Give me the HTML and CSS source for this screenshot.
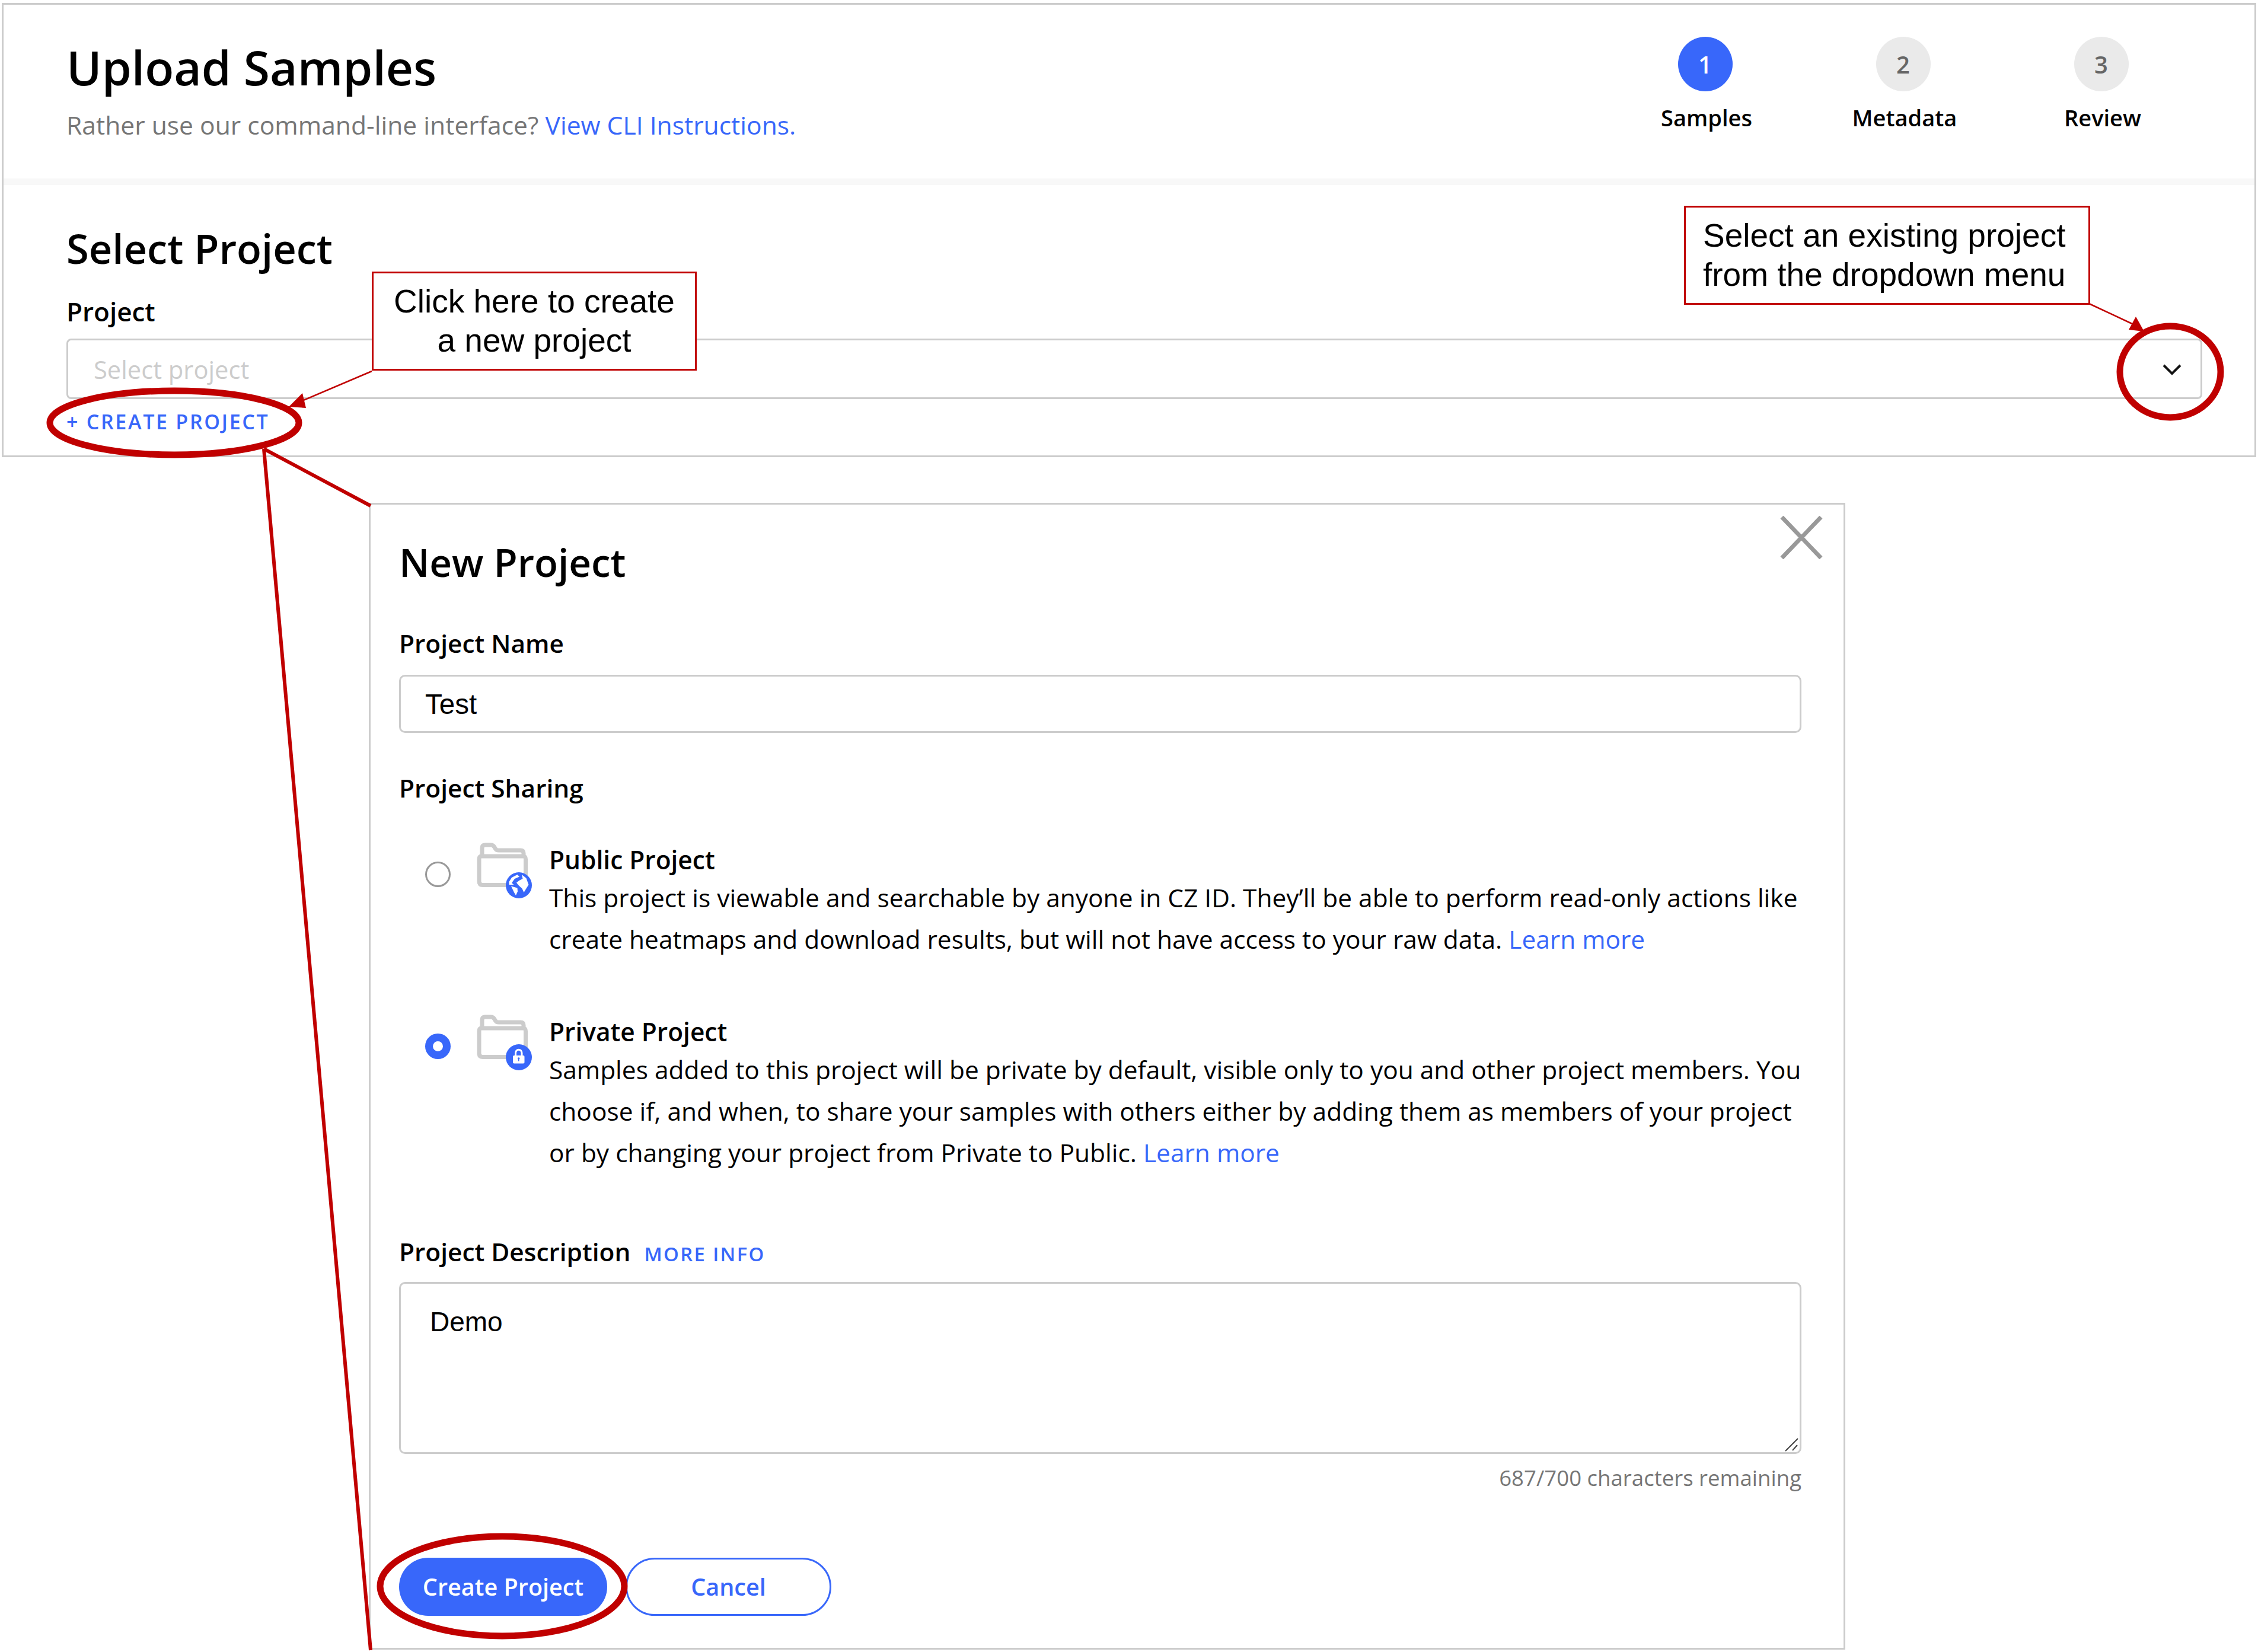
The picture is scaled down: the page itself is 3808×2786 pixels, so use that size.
FILE: index.html
```html
<!DOCTYPE html>
<html lang="en">
<head>
<meta charset="utf-8">
<title>Upload Samples</title>
<link rel="stylesheet" href="styles.css">
</head>
<body>
<div class="page">
  <section class="top-card">
    <header class="head">
      <div class="head-text">
        <h1 class="title">Upload Samples</h1>
        <p class="subtitle">Rather use our command-line interface? <a class="link">View CLI Instructions.</a></p>
      </div>
      <ol class="steps">
        <li class="step"><span class="dot dot-on">1</span><span class="step-label">Samples</span></li>
        <li class="step"><span class="dot">2</span><span class="step-label">Metadata</span></li>
        <li class="step"><span class="dot">3</span><span class="step-label">Review</span></li>
      </ol>
    </header>
    <div class="select-area">
      <h2 class="section-title">Select Project</h2>
      <div class="label project-label">Project</div>
      <div class="select">
        <span class="placeholder">Select project</span>
        <svg class="chevron" width="34" height="20" viewBox="0 0 34 20"><path d="M3 3 L17 17 L31 3" fill="none" stroke="#111" stroke-width="4"/></svg>
      </div>
      <a class="create-link">+ CREATE PROJECT</a>
    </div>
  </section>

  <section class="modal">
    <svg class="close" width="72" height="73" viewBox="0 0 72 73"><path d="M3 2 L69 71 M69 2 L3 71" stroke="#999" stroke-width="7" fill="none"/></svg>
    <h2 class="modal-title">New Project</h2>
    <div class="label name-label">Project Name</div>
    <div class="field name-field">Test</div>
    <div class="label sharing-label">Project Sharing</div>

    <div class="option public-option">
      <span class="radio"></span>
      <svg class="folder" width="96" height="96" viewBox="0 0 96 96">
        <path d="M11 22 V10 Q11 5 16 5 H26 Q30 5 32 9 L34 12 Q35 14 39 14 H76 Q81 14 81 19 V24" fill="none" stroke="#ccc" stroke-width="7"/>
        <path d="M10 24 H80 Q84.500 24 84.500 29 V62 M62 72.500 H12 Q6 72.500 6 66 V29 Q6 24 10 24" fill="none" stroke="#ccc" stroke-width="7"/>
        <circle cx="73" cy="73" r="22" fill="#3867fa"/>
        <path d="M56.500 67 L61 60 L70.500 55 L74 58.500 L66 62 L61 69 L64.500 72 L56.500 72 Z M60 74.500 L70.500 77.500 L71 83.500 L68 90 L65 85 Z M78 55 L85.500 61 L89.500 72 L84.500 80 L81.500 85 L78.500 78.500 L72 72.500 L69 68.500 L73.500 65 L79.500 62 Z" fill="#fff"/>
      </svg>
      <div class="option-text">
        <div class="option-title">Public Project</div>
        <p class="option-desc">This project is viewable and searchable by anyone in CZ ID. They’ll be able to perform read-only actions like<br>create heatmaps and download results, but will not have access to your raw data. <a class="link">Learn more</a></p>
      </div>
    </div>

    <div class="option private-option">
      <span class="radio radio-on"></span>
      <svg class="folder" width="96" height="96" viewBox="0 0 96 96">
        <path d="M11 22 V10 Q11 5 16 5 H26 Q30 5 32 9 L34 12 Q35 14 39 14 H76 Q81 14 81 19 V24" fill="none" stroke="#ccc" stroke-width="7"/>
        <path d="M10 24 H80 Q84.500 24 84.500 29 V62 M62 72.500 H12 Q6 72.500 6 66 V29 Q6 24 10 24" fill="none" stroke="#ccc" stroke-width="7"/>
        <circle cx="73" cy="73" r="22" fill="#3867fa"/>
        <path d="M67.500 71 V66 A5.200 5.800 0 0 1 78 66 V71" fill="none" stroke="#fff" stroke-width="3"/>
        <rect x="63" y="70" width="19.500" height="13.500" rx="2" fill="#fff"/>
        <circle cx="72.700" cy="75" r="1.800" fill="#3867fa"/>
        <path d="M72.700 75 V79.500" stroke="#3867fa" stroke-width="1.500"/>
      </svg>
      <div class="option-text">
        <div class="option-title">Private Project</div>
        <p class="option-desc">Samples added to this project will be private by default, visible only to you and other project members. You<br>choose if, and when, to share your samples with others either by adding them as members of your project<br>or by changing your project from Private to Public. <a class="link">Learn more</a></p>
      </div>
    </div>

    <div class="desc-head">
      <span class="label">Project Description</span>
      <a class="more-info">MORE INFO</a>
    </div>
    <div class="field desc-field">Demo
      <svg class="grip" width="24" height="24" viewBox="0 0 24 24"><path d="M2 23 L23 2 M14 22 L22 13" stroke="#444" stroke-width="2" fill="none"/></svg>
    </div>
    <div class="counter">687/700 characters remaining</div>
    <div class="actions">
      <button class="btn btn-primary">Create Project</button>
      <button class="btn btn-ghost">Cancel</button>
    </div>
  </section>

  <svg class="marks" width="3808" height="2786" viewBox="0 0 3808 2786">
    <g fill="none" stroke="#c00000">
      <ellipse cx="294" cy="713" rx="210" ry="54" stroke-width="11"/>
      <ellipse cx="3660" cy="627" rx="85" ry="77" stroke-width="11"/>
      <ellipse cx="847" cy="2675" rx="206" ry="84" stroke-width="11"/>
      <path d="M445 757 L625 853 M445 757 L625 2783" stroke-width="6"/>
      <path d="M627 626 L500 680" stroke-width="2.500"/>
      <path d="M3523 512 L3602 549" stroke-width="2.500"/>
    </g>
    <path d="M487 686 L510 663 L516 688 Z" fill="#c00000"/>
    <path d="M3616 559 L3590 556 L3602 534 Z" fill="#c00000"/>
  </svg>

  <div class="callout callout-create">Click here to create<br>a new project</div>
  <div class="callout callout-select">Select an existing project<br>from the dropdown menu</div>
</div>
</body>
</html>
```
FILE: styles.css
```css
* { box-sizing: border-box; }
html, body { margin: 0; padding: 0; background: #fff; }
body { width: 3808px; height: 2786px; overflow: hidden; font-family: "Open Sans", sans-serif; color: #000; }
.page { position: relative; width: 3808px; height: 2786px; padding: 5px 3px 0; }
h1, h2, p, ol { margin: 0; padding: 0; }
.link { color: #3867fa; }

.top-card { width: 3802px; height: 766px; border: 3px solid #ccc; background: #fff; }
.head { height: 293px; display: flex; justify-content: space-between; padding-right: 89px; }
.head-text { padding: 55px 0 0 106px; }
.title { font-size: 80.4px; line-height: 100px; font-weight: 600; }
.subtitle { margin-top: 17px; font-size: 42.6px; line-height: 60px; color: #767676; }
.steps { display: flex; list-style: none; padding-top: 54px; }
.step { width: 334px; display: flex; flex-direction: column; align-items: center; }
.dot { width: 92px; height: 92px; margin-right: 5px; border-radius: 50%; background: #eaeaea; color: #666; display: flex; align-items: center; justify-content: center; font-size: 40px; font-weight: 600; }
.dot-on { background: #3867fa; color: #fff; }
.step-label { margin-top: 18px; font-size: 38px; line-height: 52px; font-weight: 600; }

.select-area { border-top: 11px solid #f8f8f8; padding: 62px 106px 0; height: 465px; }
.section-title { font-size: 68.7px; line-height: 90px; font-weight: 600; }
.label { font-size: 42.4px; line-height: 60px; font-weight: 600; }
.project-label { margin-top: 31px; font-size: 44px; }
.select { position: relative; width: 3602px; height: 102px; margin-top: 16px; border: 3px solid #ccc; border-radius: 8px; display: flex; align-items: center; justify-content: space-between; padding: 0 31px 0 43px; }
.chevron { position: relative; top: 1px; }
.placeholder { font-size: 41.7px; color: #ccc; }
.create-link { display: block; margin-top: 13px; font-size: 34px; line-height: 50px; font-weight: 600; letter-spacing: 2.7px; color: #3867fa; }

.modal { position: relative; width: 2490px; height: 1934px; margin: 77px 0 0 619px; border: 3px solid #ccc; padding: 0 0 0 48px; }
.close { position: absolute; top: 19px; right: 35px; }
.modal-title { padding-top: 52px; font-size: 65.5px; line-height: 90px; font-weight: 600; }
.name-label { margin-top: 62px; }
.field { position: relative; width: 2365px; border: 3px solid #ccc; border-radius: 10px; font-family: "Liberation Sans", Arial, sans-serif; font-size: 47.5px; }
.name-field { height: 98px; margin-top: 23px; line-height: 94px; padding-left: 41px; }
.sharing-label { margin-top: 63px; }
.option { position: relative; display: flex; }
.public-option { margin-top: 61px; height: 290px; }
.private-option { height: 371px; }
.radio { width: 43px; height: 43px; margin: 33px 0 0 44px; border: 3px solid #999; border-radius: 50%; flex: none; }
.radio-on { border: 13px solid #3867fa; background: #fff; }
.folder { flex: none; margin-left: 42px; margin-right: -2px; }
.option-text { margin: 0 0 0 30px; width: 2160px; font-size: 42.45px; white-space: nowrap; }
.option-title { font-weight: 600; line-height: 60px; }
.option-desc { line-height: 70px; margin-top: -1px; }
.desc-head { display: flex; align-items: baseline; }
.more-info { margin-left: 23px; font-size: 32.8px; font-weight: 600; letter-spacing: 2.4px; color: #3867fa; }
.desc-field { height: 290px; margin-top: 21px; padding: 29px 0 0 49px; line-height: 70px; font-size: 46px; }
.grip { position: absolute; right: 2px; bottom: 1px; }
.counter { width: 2365px; margin-top: 14px; text-align: right; font-size: 36.6px; line-height: 52px; color: #767676; }
.actions { display: flex; gap: 31px; margin-top: 109px; }
.btn { height: 98px; border-radius: 49px; font-family: "Open Sans", sans-serif; font-size: 39.6px; font-weight: 600; }
.btn-primary { width: 351px; border: 0; background: #3867fa; color: #fff; }
.btn-ghost { width: 347px; border: 3px solid #3867fa; background: #fff; color: #3867fa; }

.marks { position: absolute; left: 0; top: 0; pointer-events: none; }
.callout { position: absolute; border: 3px solid #c00000; background: #fff; height: 167px; padding: 14px 0 0 29px; font-family: "Liberation Sans", Arial, sans-serif; font-size: 55px; line-height: 66px; white-space: nowrap; }
.callout-create { left: 627px; top: 458px; width: 548px; padding-left: 0; text-align: center; }
.callout-select { left: 2840px; top: 347px; width: 685px; }
```
